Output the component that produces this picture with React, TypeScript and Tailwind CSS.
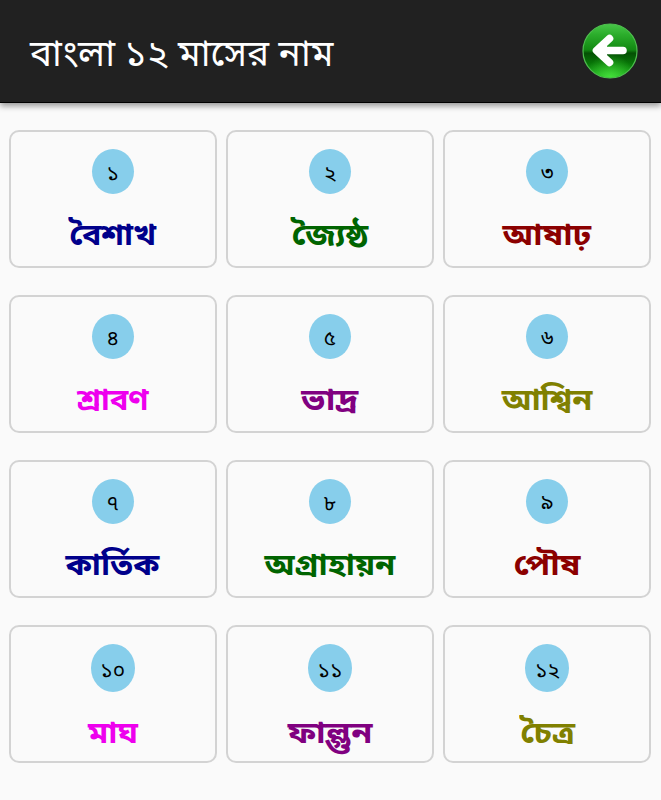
const months = [
  { n: '১', name: 'বৈশাখ', style: 'text-[#00008b] scale-x-[1.07]' },
  { n: '২', name: 'জ্যৈষ্ঠ', style: 'text-[#006400] scale-x-[1.13]' },
  { n: '৩', name: 'আষাঢ়', style: 'text-[#8b0000] scale-x-[1.11]' },
  { n: '৪', name: 'শ্রাবণ', style: 'text-[#ee00ee] scale-x-[1.03]' },
  { n: '৫', name: 'ভাদ্র', style: 'text-[#800080] scale-x-[1.15]' },
  { n: '৬', name: 'আশ্বিন', style: 'text-[#808000] scale-x-[1.08]' },
  { n: '৭', name: 'কার্তিক', style: 'text-[#00008b] scale-x-[1.08]' },
  { n: '৮', name: 'অগ্রাহায়ন', style: 'text-[#006400] scale-x-[1.09]' },
  { n: '৯', name: 'পৌষ', style: 'text-[#8b0000] scale-x-[1.12]' },
  { n: '১০', name: 'মাঘ', style: 'text-[#ee00ee] scale-x-[1.09]' },
  { n: '১১', name: 'ফাল্গুন', style: 'text-[#800080] scale-x-[1.14]' },
  { n: '১২', name: 'চৈত্র', style: 'text-[#808000] scale-x-[1.11]' },
];

function BackButton() {
  return (
    <svg className="h-14 w-14" viewBox="0 0 56 56" aria-label="Back">
      <defs>
        <linearGradient id="orb" x1="0" y1="0" x2="0" y2="1">
          <stop offset="0" stopColor="#48c648" />
          <stop offset="0.2" stopColor="#2bad2b" />
          <stop offset="0.48" stopColor="#128812" />
          <stop offset="0.54" stopColor="#045004" />
          <stop offset="0.72" stopColor="#077407" />
          <stop offset="1" stopColor="#22b822" />
        </linearGradient>
        <radialGradient id="glow" cx="0.5" cy="1" r="0.45">
          <stop offset="0" stopColor="#5cff4c" stopOpacity="0.6" />
          <stop offset="1" stopColor="#5cff4c" stopOpacity="0" />
        </radialGradient>
      </defs>
      <circle cx="28" cy="28" r="27" fill="url(#orb)" stroke="#4fbf4f" strokeWidth="1.2" />
      <circle cx="28" cy="28" r="26.5" fill="url(#glow)" />
      <path d="M27.5 15.5 14.5 27.5 27.5 39.5M15 27.5h26" fill="none" stroke="#fff" strokeWidth="7.6" strokeLinecap="round" strokeLinejoin="round" />
      <path d="m14 27.5 11-9v18z" fill="#fff" />
    </svg>
  );
}

export default function App() {
  return (
    <div className="h-[800px] w-[661px] overflow-hidden bg-[#fafafa] font-['Noto_Sans','Noto_Sans_Bengali',sans-serif]">
      <header className="flex h-[103px] items-center justify-between border-b border-black bg-[#212121] pl-[30px] pr-[23px] text-white shadow-[0_3px_6px_rgba(0,0,0,0.4)]">
        <h1 className="pt-0.5 text-[37px]">বাংলা ১২ মাসের নাম</h1>
        <BackButton />
      </header>
      <main className="grid grid-cols-3 gap-x-[9px] gap-y-[27px] pt-[27px] pr-[9.5px] pl-[8.5px]">
        {months.map((m) => (
          <div key={m.n} className="flex h-[138px] flex-col items-center rounded-[10px] border-2 border-[#d3d3d3] pt-[17px]">
            <div className={`flex items-center justify-center rounded-[50%] bg-[#87ceeb] pt-0.5 text-[21px] leading-none text-black ${m.n.length > 1 ? 'h-12 w-11' : 'h-[45px] w-[42px]'}`}>{m.n}</div>
            <div className={`mt-[15px] text-[30px] leading-[50px] font-bold ${m.style}`}>{m.name}</div>
          </div>
        ))}
      </main>
    </div>
  );
}
